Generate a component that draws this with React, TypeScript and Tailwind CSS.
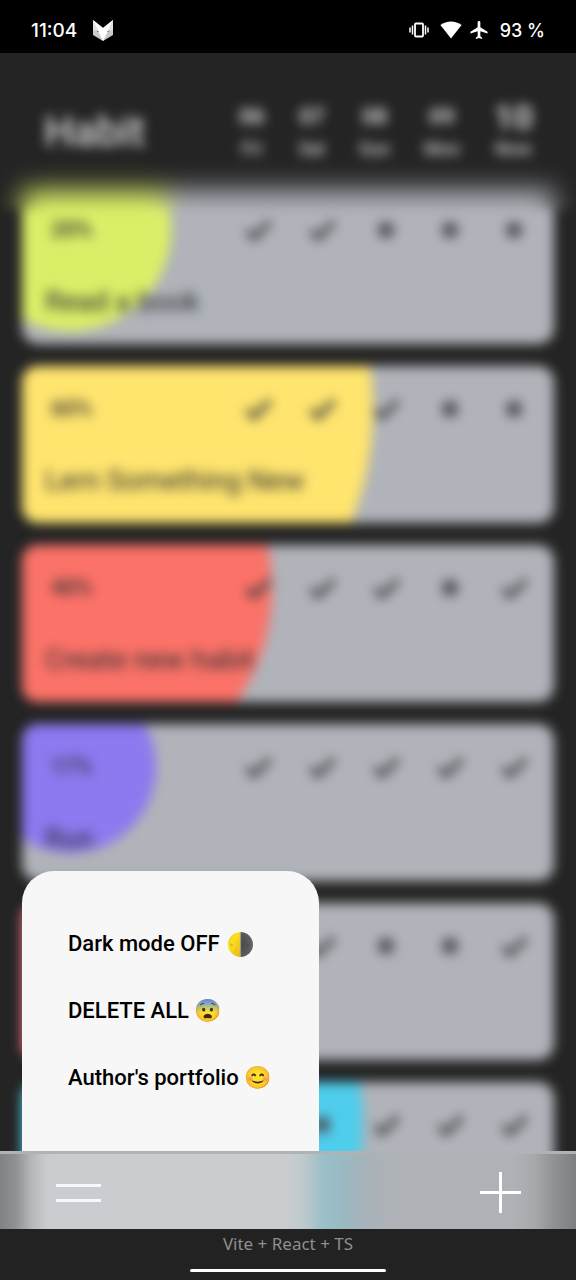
import { useState } from "react";

type Habit = { percent: number; name?: string; fill: string; days: boolean[] };

const habits: Habit[] = [
  { percent: 20, name: "Read a book", fill: "bg-[#dcee68]", days: [true, true, false, false, false] },
  { percent: 60, name: "Lern Something New", fill: "bg-[#ffe46e]", days: [true, true, true, false, false] },
  { percent: 40, name: "Create new habit", fill: "bg-[#fb7268]", days: [true, true, true, false, true] },
  { percent: 17, name: "Run", fill: "bg-[#8d79f0]", days: [true, true, true, true, true] },
  { percent: 40, fill: "bg-[#f2748c]", days: [true, true, false, false, true] },
  { percent: 58, fill: "bg-[#4fcdec]", days: [true, false, true, true, true] },
];

const dates = [
  { day: "06", label: "Fri" },
  { day: "07", label: "Sat" },
  { day: "08", label: "Sun" },
  { day: "09", label: "Mon" },
  { day: "10", label: "Now", today: true },
];

function StatusBar() {
  return (
    <div className="relative z-20 flex h-[53px] shrink-0 items-center justify-between bg-black pt-[7px] pr-[31px] pl-[31px] font-['Inter',sans-serif] text-[19px] font-medium text-white">
      <div className="flex items-center gap-4">
        <span className="pt-0.5">11:04</span>
        <svg width="20" height="21" viewBox="0 0 20 21" aria-hidden="true">
          <path d="M0 0 10 8 20 0V15L10 21 0 15Z" fill="#c9c9c9" />
          <path d="M0 0 10 8 20 0 15 11 10 21 5 11Z" fill="#fff" />
          <path d="M0 0V10L5 11Z" fill="#e2e2e2" />
          <path d="M20 0V10L15 11Z" fill="#e2e2e2" />
          <path d="M3.5 10.5 6 11.5 5 12Z M16.5 10.5 14 11.5 15 12Z" fill="#333" />
        </svg>
      </div>
      <div className="flex items-center">
        <svg width="20" height="16" viewBox="0 0 20 16" fill="none" stroke="#fff" aria-hidden="true">
          <rect x="6" y="1.5" width="8" height="13" rx="1" strokeWidth="1.8" />
          <path d="M3.5 3.5V12.5M16.5 3.5V12.5M1 5.5V10.5M19 5.5V10.5" strokeWidth="1.5" />
        </svg>
        <svg className="ml-[11px]" width="22" height="18" viewBox="0 0 22 18" fill="#fff" aria-hidden="true">
          <path d="M.4 4C6.500-.8 15.500-.8 21.600 4L11 17.500Z" />
        </svg>
        <svg className="ml-2" width="18" height="18" viewBox="2 2 19 20" fill="#fff" aria-hidden="true">
          <path d="M21 16v-2l-8-5V3.500c0-.83-.67-1.500-1.500-1.500S10 2.670 10 3.500V9l-8 5v2l8-2.500V19l-2 1.500V22l3.500-1 3.500 1v-1.500L13 19v-5.500l8 2.500z" />
        </svg>
        <span className="ml-3 pt-0.5 text-lg">93 %</span>
      </div>
    </div>
  );
}

function HeaderFade() {
  return (
    <div className="absolute inset-x-0 bottom-0 h-16 overflow-hidden bg-[#242424]" aria-hidden="true">
      <div className="mx-[22px] mt-[45px] flex h-20 blur-[12px]">
        <div className="w-[145px] bg-[#dcee68]" />
        <div className="flex-1 bg-[#b0b3bb]" />
      </div>
    </div>
  );
}

function Header() {
  return (
    <header className="relative z-10 -mb-[22px] h-[156px] text-[#d8d8d8]">
      <HeaderFade />
      <div className="relative flex items-start justify-between pt-[46px] pr-[43px] pl-11">
        <h1 className="pt-2 text-[42px] leading-[50px] font-medium">Habit</h1>
        <ul className="flex gap-[34px]">
          {dates.map((d) => (
            <li key={d.day} className="flex flex-col items-center">
              <span
                className={
                  d.today
                    ? "flex h-9 items-center text-[34px] leading-9 font-bold"
                    : "flex h-9 items-center text-[22px] leading-9 font-bold"
                }
              >
                {d.day}
              </span>
              <span className="text-lg leading-7 font-medium">{d.label}</span>
            </li>
          ))}
        </ul>
      </div>
    </header>
  );
}

function Mark({ done }: { done: boolean }) {
  return (
    <svg width="28" height="28" viewBox="0 0 28 28" role="img" aria-label={done ? "Done" : "Missed"}>
      {done ? (
        <path d="M3 15 10 22 26 6" fill="none" stroke="#36383c" strokeWidth="5" />
      ) : (
        <circle cx="14" cy="14" r="8" fill="#4c4e54" />
      )}
    </svg>
  );
}

function HabitCard({ habit }: { habit: Habit }) {
  const radius = habit.percent * 5.05;
  return (
    <li className="relative flex h-[157px] shrink-0 flex-col justify-between overflow-hidden rounded-2xl bg-[#b0b3b9] pt-[29px] pr-[26px] pb-6 pl-[23px] text-[#2a2c30]">
      <div
        className={`absolute rounded-full ${habit.fill}`}
        style={{ width: radius * 2, height: radius * 2, left: 48 - radius, top: 43 - radius }}
      />
      <div className="relative flex items-center justify-end">
        {habit.name && <span className="mr-auto pl-1.5 text-[22px] leading-7 font-medium">{habit.percent}%</span>}
        <div className="flex gap-9">
          {habit.days.map((done, i) => (
            <Mark key={i} done={done} />
          ))}
        </div>
      </div>
      {habit.name && <h2 className="relative text-[28px] leading-9">{habit.name}</h2>}
    </li>
  );
}

function HalfMoon() {
  return (
    <svg width="25" height="25" viewBox="0 0 25 25" aria-hidden="true">
      <defs>
        <linearGradient id="lit" x1="0" y1="0" x2="1" y2="1">
          <stop offset="0" stopColor="#e0b81c" />
          <stop offset=".35" stopColor="#fbe21f" />
          <stop offset="1" stopColor="#e3b522" />
        </linearGradient>
        <radialGradient id="shade" cx=".2" cy=".5" r=".9">
          <stop offset="0" stopColor="#4a4a4c" />
          <stop offset="1" stopColor="#6a6a6a" />
        </radialGradient>
      </defs>
      <path d="M12.500 0A12.500 12.500 0 0 0 12.500 25Z" fill="url(#lit)" />
      <path d="M12.500 0A12.500 12.500 0 0 1 12.500 25Z" fill="url(#shade)" />
      <circle cx="3.500" cy="13" r="1.500" fill="#e9b51c" />
      <circle cx="8" cy="18" r="1.200" fill="#edc21e" />
      <circle cx="20" cy="13" r="1.200" fill="#4c4c4c" />
    </svg>
  );
}

function Menu() {
  return (
    <div className="absolute bottom-0 left-[22px] flex h-[358px] w-[297px] flex-col items-start gap-[39px] rounded-t-[32px] bg-[#f7f7f7] pt-[59px] pr-5 pl-[46px] text-[22px] leading-7 font-medium text-black">
      <button type="button" className="flex items-center gap-2">
        Dark mode OFF <HalfMoon />
      </button>
      <button type="button">DELETE ALL 😨</button>
      <a href="#portfolio" className="whitespace-nowrap">
        Author's portfolio 😊
      </a>
    </div>
  );
}

const navOpen =
  "bg-[linear-gradient(to_right,#7f8386_0,#8e9295_16px,#b5b9bb_32px,#c7cbcd_46px,#cacdcf_56px,#cacdcf_285px,#bfcacd_303px,#9dbfc8_322px,#98bac3_340px,#a6b3ba_362px,#aeb2b7_390px,#aeb2b6_calc(100%-62px),#a6aaac_calc(100%-42px),#8e9294_calc(100%-22px),#7c8083_100%)]";
const navClosed = "bg-[#afb3b6]/60 backdrop-blur-lg";

export default function App() {
  const [open, setOpen] = useState(true);
  return (
    <div className="flex h-screen flex-col overflow-hidden bg-[#242424] font-['Roboto',sans-serif]">
      <StatusBar />
      <main className="relative isolate min-h-0 flex-1 overflow-hidden bg-[#242424]">
        <div className={open ? "blur-[6px]" : ""}>
          <Header />
          <ul className="flex flex-col gap-[22px] px-[22px]">
            {habits.map((habit, i) => (
              <HabitCard key={i} habit={habit} />
            ))}
          </ul>
        </div>
        {open && <Menu />}
        <nav
          className={`absolute inset-x-0 bottom-0 flex h-[78px] items-center justify-between border-t-[3px] border-[#afb3b6] pt-0.5 pr-[55px] pl-14 ${open ? navOpen : navClosed}`}
        >
          <button type="button" aria-label="Menu" className="flex flex-col gap-3" onClick={() => setOpen(!open)}>
            <span className="h-[3px] w-[45px] bg-[#f5f9ff]" />
            <span className="h-[3px] w-[45px] bg-[#f5f9ff]" />
          </button>
          <button type="button" aria-label="Add habit">
            <svg width="41" height="41" viewBox="0 0 41 41" stroke="#fff" strokeWidth="3">
              <path d="M20.500 0V41M0 20.500H41" />
            </svg>
          </button>
        </nav>
      </main>
      <footer className="relative z-20 flex h-[51px] shrink-0 flex-col items-center justify-between bg-[#222] pt-[3px] pb-2 font-['Noto_Sans',sans-serif] text-[17px] leading-6 text-[#8f8f8f]">
        <p>Vite + React + TS</p>
        <div className="h-[3px] w-[196px] rounded-full bg-white" />
      </footer>
    </div>
  );
}
